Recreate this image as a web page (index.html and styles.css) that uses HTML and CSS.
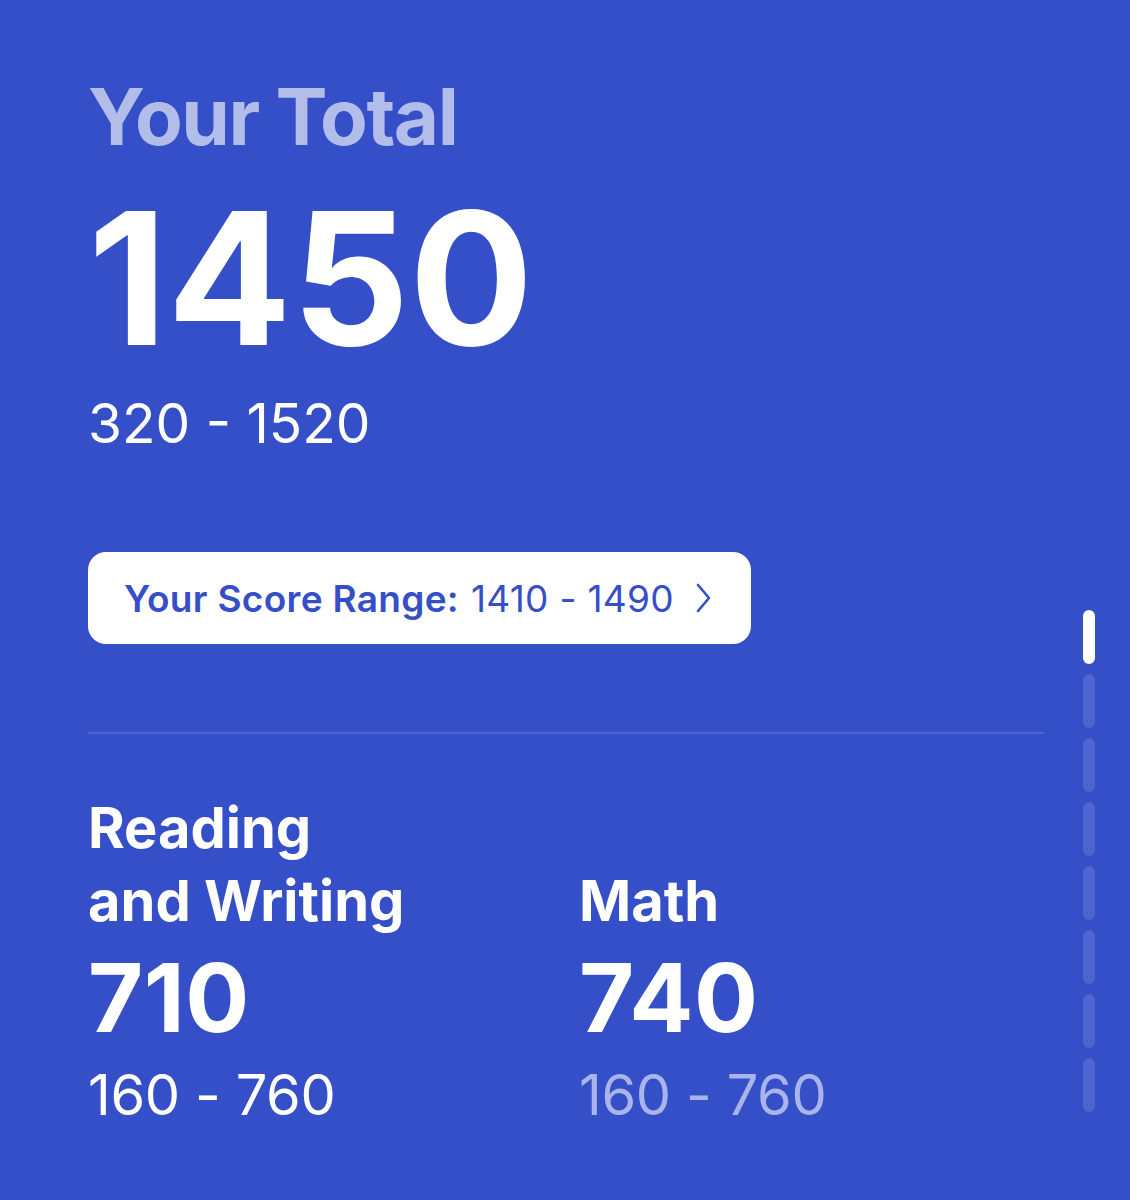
FILE: index.html
```html
<!DOCTYPE html>
<html lang="en">
<head>
  <meta charset="UTF-8">
  <meta name="viewport" content="width=device-width, initial-scale=1.0">
  <title>Your Total</title>
  <link rel="stylesheet" href="styles.css">
</head>
<body>
  <div class="screen">
    <main class="scores">
      <h1 class="eyebrow">Your Total</h1>
      <div class="total">1450</div>
      <p class="range">320 - 1520</p>

      <button class="rangeBtn" type="button">
        <strong>Your Score Range:</strong> 1410 - 1490
        <svg class="chev" width="18" height="32" viewBox="0 0 18 32" fill="none">
          <path d="M4 3 L15 16 L4 29" stroke="#344fc8" stroke-width="2.6" stroke-linecap="round" stroke-linejoin="round"/>
        </svg>
      </button>

      <hr class="divider">

      <div class="sections">
        <div class="section">
          <h2>Reading<br>and Writing</h2>
          <div class="score">710</div>
          <p class="sub">160 - 760</p>
        </div>
        <div class="section">
          <h2>Math</h2>
          <div class="score">740</div>
          <p class="sub faded">160 - 760</p>
        </div>
      </div>
    </main>

    <!-- page indicator, first card active -->
    <aside class="pager">
      <span class="dash on"></span>
      <span class="dash"></span>
      <span class="dash"></span>
      <span class="dash"></span>
      <span class="dash"></span>
      <span class="dash"></span>
      <span class="dash"></span>
      <span class="dash"></span>
    </aside>
  </div>
</body>
</html>
```

FILE: styles.css
```css
html, body { margin: 0; height: 100%; }
body { background: #344fc8; color: #fff; font-family: Inter, "Noto Sans", sans-serif; }
.screen { display: flex; padding: 70px 0 0 88px; }
.scores { width: 956px; flex-shrink: 0; }
.eyebrow { margin: 0; font-size: 78px; font-weight: 700; color: #b3bdea; letter-spacing: -1.5px; line-height: 94px; }
.total { font-size: 184px; font-weight: 700; letter-spacing: 0; line-height: 200px; margin-top: 14px; }
.range { margin: 12px 0 0; font-size: 55px; font-weight: 400; line-height: 66px; }
.rangeBtn { display: flex; align-items: center; gap: 12px; margin-top: 96px; width: 663px; height: 92px; padding: 0 36px; border: 0; border-radius: 18px; background: #fff; color: #344fc8; font-family: inherit; font-size: 37px; font-weight: 400; letter-spacing: 0.3px; }
.rangeBtn strong { font-weight: 600; }
.chev { margin-left: 8px; }
.divider { margin: 88px 0 0; border: 0; border-top: 2px solid #4b66d2; }
.sections { display: flex; margin-top: 58px; }
.section { width: 491px; flex-shrink: 0; display: flex; flex-direction: column; justify-content: flex-end; }
.section h2 { margin: 0; font-size: 56px; font-weight: 700; line-height: 73px; letter-spacing: 0; }
.score { font-size: 95px; font-weight: 700; line-height: 112px; letter-spacing: 0.5px; margin-top: 4px; }
.sub { margin: 6px 0 0; font-size: 56px; font-weight: 400; line-height: 70px; letter-spacing: -0.4px; }
.sub.faded { color: #a9b5ea; }
.pager { display: flex; flex-direction: column; gap: 10px; margin: 540px 0 0 39px; }
.dash { width: 12px; height: 54px; border-radius: 6px; background: rgba(255, 255, 255, 0.13); }
.dash.on { background: #fff; }
```
